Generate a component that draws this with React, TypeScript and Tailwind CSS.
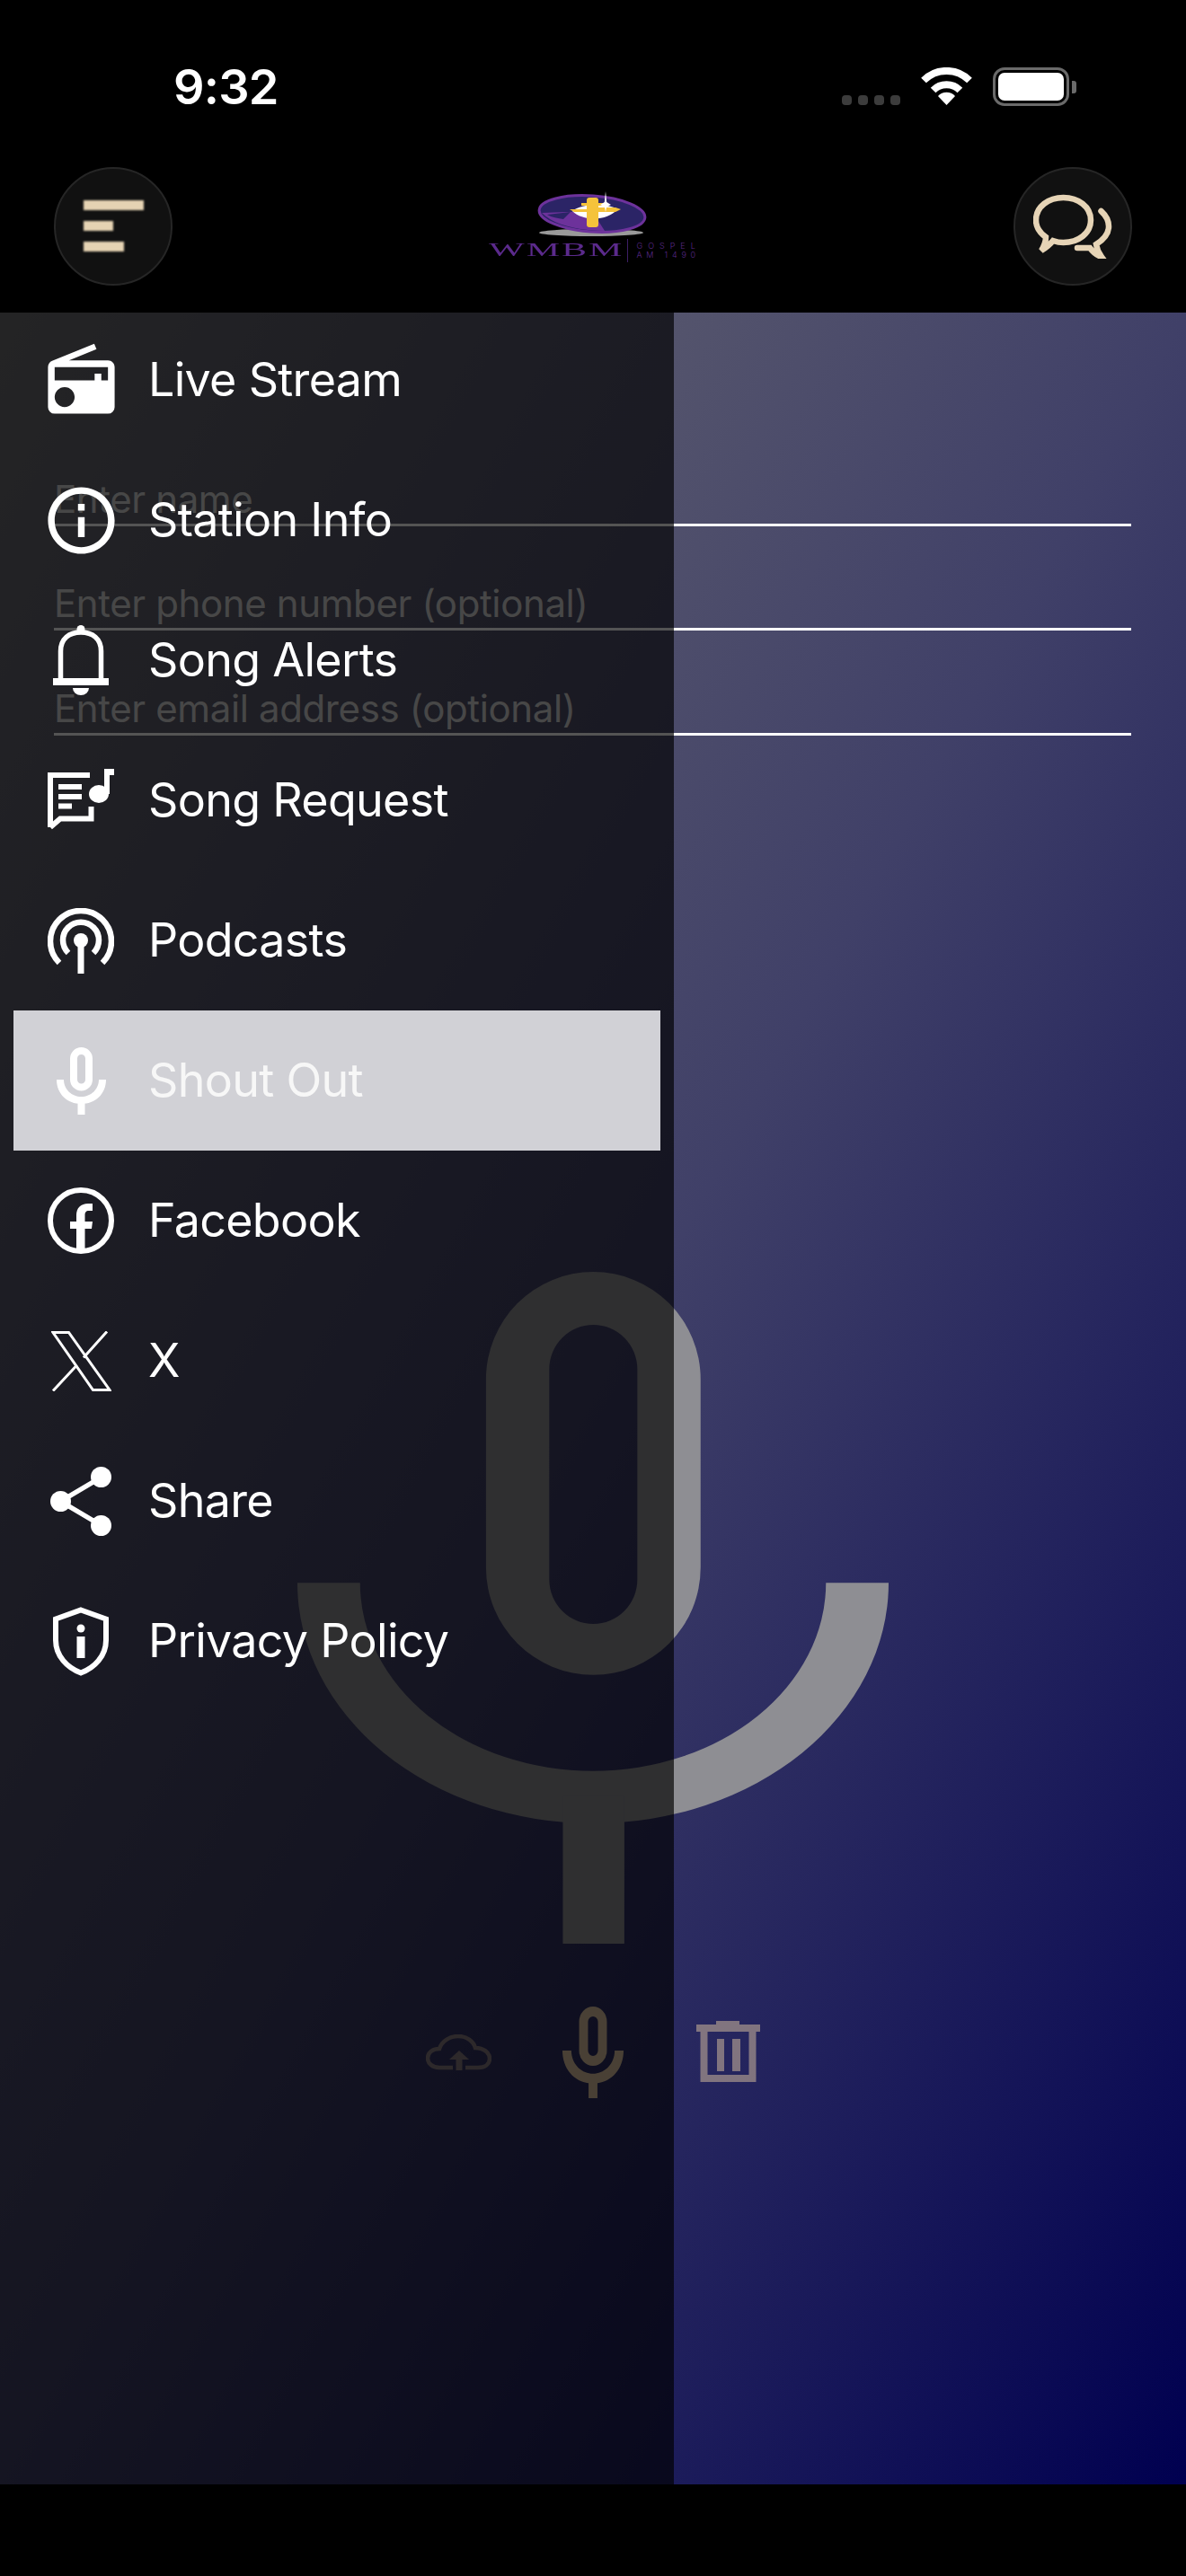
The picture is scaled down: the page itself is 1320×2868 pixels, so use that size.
import React from "react";
import { MdRadio, MdInfoOutline } from "react-icons/md";

const BigMic = ({ className }: { className: string }) => (
  <svg viewBox="0 0 100 100" preserveAspectRatio="none" className={className} fill="currentColor">
    <path
      fillRule="evenodd"
      d="M31.9 16A18.15 16 0 0 1 68.2 16V44A18.15 16 0 0 1 31.9 44ZM42.6 14.5A7.45 6.6 0 0 1 57.5 14.5V45.8A7.45 6.6 0 0 1 42.6 45.8Z"
    />
    <path d="M0 46.3H10.6A39.4 28 0 0 0 89.4 46.3H100A50 35.8 0 0 1 0 46.3Z" />
    <rect x="44.9" y="78" width="10.4" height="22" />
  </svg>
);

const SmallMic = ({ className }: { className: string }) => (
  <svg viewBox="0 0 55 75" preserveAspectRatio="none" className={className} fill="currentColor">
    <path
      fillRule="evenodd"
      d="M15 12.5a12.5 12.5 0 0 1 25 0V36a12.500 12.500 0 0 1-25 0ZM23 12.500a4.500 4.500 0 0 1 9 0V36a4.500 4.500 0 0 1-9 0Z"
    />
    <path d="M0 36H8C8 47 17 55 27.500 55S47 47 47 36H55C55 52 43 63 27.500 63S0 52 0 36Z" />
    <rect x="23.500" y="60" width="8" height="15" />
  </svg>
);

const BellIcon = () => (
  <svg viewBox="0 0 62 78" className="h-[78px] w-[62px]" fill="white">
    <circle cx="31" cy="4.5" r="4.5" />
    <path d="M8.5 60V29C8.5 15 18 8 31 8s22.5 7 22.5 21V60" fill="none" stroke="white" strokeWidth="5.500" />
    <rect x="0" y="59" width="62" height="8" />
    <path d="M22 70H40A9 8 0 0 1 22 70Z" />
  </svg>
);

const SongRequestIcon = () => (
  <svg viewBox="0 0 74 71" className="h-[71px] w-[74px]" fill="white">
    <path d="M3 65V7H47M48.500 42V55.500H14L3 65" fill="none" stroke="white" strokeWidth="6" />
    <rect x="12" y="17" width="26" height="6" />
    <rect x="12" y="28" width="26" height="6" />
    <rect x="12" y="38.500" width="15" height="6" />
    <ellipse cx="57" cy="28" rx="11" ry="10" />
    <rect x="63" y="0" width="6" height="28" />
    <rect x="63" y="0" width="11" height="7" />
  </svg>
);

const PodcastIcon = () => (
  <svg viewBox="0 0 74 73" className="h-[73px] w-[74px]" fill="none" stroke="white" strokeWidth="6.500">
    <path d="M13 61A34 34 0 1 1 61 61" />
    <path d="M23 50A20 20 0 1 1 51 50" />
    <circle cx="37" cy="36" r="8" fill="white" stroke="none" />
    <rect x="33.500" y="38" width="7" height="35" fill="white" stroke="none" />
  </svg>
);

const FacebookIcon = () => (
  <svg viewBox="0 0 74 74" className="h-[74px] w-[74px]" fill="white">
    <circle cx="37" cy="37" r="34" fill="none" stroke="white" strokeWidth="6" />
    <path d="M32 72V46H25V38H32V31C32 23 37 18 45 18H50V26H46C42.500 26 41.500 28 41.500 31V38H50L49 46H41.500V72Z" />
  </svg>
);

const XIcon = () => (
  <svg viewBox="0 0 67 67" className="h-[67px] w-[67px]" fill="none" stroke="white" strokeWidth="3">
    <path d="M2 1.500H19.500L65 65.500H46.500Z" />
    <path d="M62 0.500L36 29.500M28.500 38L2 66.500" />
  </svg>
);

const ShareIcon = () => (
  <svg viewBox="0 0 68 77" className="h-[77px] w-[68px]" fill="white">
    <path d="M57 11.500L11.500 38.500L57 65.500" fill="none" stroke="white" strokeWidth="5.500" />
    <circle cx="11.500" cy="38.500" r="11.500" />
    <circle cx="56.500" cy="11.500" r="11.500" />
    <circle cx="56.500" cy="65.500" r="11.500" />
  </svg>
);

const ShieldIcon = () => (
  <svg viewBox="0 0 62 77" className="h-[77px] w-[62px]" fill="white">
    <path d="M31 3.500L59 13.500V37C59 55 46 68 31 73.500C16 68 3 55 3 37V13.500Z" fill="none" stroke="white" strokeWidth="6" />
    <circle cx="31" cy="24" r="4.500" />
    <rect x="26.500" y="33" width="9" height="24" />
  </svg>
);

const CloudIcon = () => (
  <svg viewBox="0 0 73 40" className="h-[40px] w-[73px]" fill="none" stroke="currentColor" strokeWidth="4.500">
    <path d="M30 37H15C7 37 2 32 2 26.500C2 20 8 16 15 16C18 7 27 2 36 2C46 2 53 8 55 15C64 15 71 20 71 27C71 33 66 37 58 37H44" />
    <path d="M37 40V21" strokeWidth="7" />
    <path d="M26 28L37 18L48 28Z" fill="currentColor" stroke="none" />
  </svg>
);

const TrashIcon = () => (
  <svg viewBox="0 0 71 71" className="h-[71px] w-[71px]" fill="currentColor">
    <rect x="22" y="0" width="26" height="6" />
    <rect x="0" y="4" width="71" height="8" />
    <path d="M8.500 10V64H62.500V10" fill="none" stroke="currentColor" strokeWidth="8" />
    <rect x="23" y="20" width="8" height="36" />
    <rect x="40" y="20" width="9" height="36" />
  </svg>
);

const ChatIcon = () => (
  <svg viewBox="0 0 88 72" className="h-[72px] w-[88px]" fill="none" stroke="#e6d4b6" strokeWidth="6.500" strokeLinecap="round">
    <path d="M33.500 4C50 4 64 14 64 29C64 44 50 54 33.500 54C28 54 25 53 22 52C18 57 14 60 9 63C12 58 14 53 14 48C7 43 3 37 3 29C3 14 17 4 33.500 4Z" />
    <path d="M75.500 19C81 24 84 30 84 36C84 44 78 51 70 56C71 62 73 66 76 70C70 68 66 64 63 60H49" />
  </svg>
);

const WifiIcon = () => (
  <svg viewBox="0 0 57 42" className="h-[42px] w-[57px]" fill="white">
    <path d="M3 14.500A36 36 0 0 1 54 14.500" fill="none" stroke="white" strokeWidth="8" />
    <path d="M13.600 25.500A21 21 0 0 1 43.400 25.500" fill="none" stroke="white" strokeWidth="8" />
    <path d="M28.500 42L19 32A13 13 0 0 1 38 32Z" />
  </svg>
);

const LogoMark = () => (
  <svg viewBox="0 0 124 50" className="h-[50px] w-[124px]">
    <ellipse cx="61" cy="46" rx="58" ry="4" fill="#9a9a9a" />
    <ellipse cx="62" cy="25" rx="59" ry="20" fill="#2b2466" stroke="#6d329b" strokeWidth="3" transform="rotate(4 62 25)" />
    <path d="M6 24L62 22L76 44C48 44 20 38 6 24Z" fill="#6d329b" />
    <path d="M12 26L38 23L30 31C24 30 17 29 12 26Z" fill="#2b2466" />
    <path d="M40 22C50 13 80 13 90 20C80 33 52 34 40 22Z" fill="white" />
    <path d="M37 20H68V18H88L94 20L88 23H42Z" fill="#f5c33b" />
    <rect x="56" y="7" width="13" height="33" rx="3" fill="#f5c33b" />
    <rect x="50" y="13" width="26" height="3" fill="#f5c33b" />
    <path d="M77 0L78.200 12L83 15L78.200 17L77 23L75.800 17L71 15L75.800 12Z" fill="white" />
  </svg>
);

const menu = [
  { label: "Live Stream", icon: <MdRadio size={89} color="white" /> },
  { label: "Station Info", icon: <MdInfoOutline size={89} color="white" /> },
  { label: "Song Alerts", icon: <BellIcon /> },
  { label: "Song Request", icon: <SongRequestIcon /> },
  { label: "Podcasts", icon: <PodcastIcon /> },
  { label: "Shout Out", icon: <SmallMic className="h-[75px] w-[55px] text-white" />, active: true },
  { label: "Facebook", icon: <FacebookIcon /> },
  { label: "X", icon: <XIcon /> },
  { label: "Share", icon: <ShareIcon /> },
  { label: "Privacy Policy", icon: <ShieldIcon /> },
];

const fields = ["Enter name", "Enter phone number (optional)", "Enter email address (optional)"];

export default function App() {
  return (
    <div className="flex h-[2868px] w-[1320px] flex-col overflow-hidden bg-black font-['Inter',sans-serif] text-white">
      <div className="flex h-[186px] items-start justify-between pl-[193px] pr-[122px] pt-[75px]">
        <div className="text-[54px] font-semibold leading-[44px] tracking-[-0.8px]">9:32</div>
        <div className="flex items-start">
          <div className="mr-[23px] mt-[31px] flex gap-[7px]">
            {[0, 1, 2, 3].map((i) => (
              <div key={i} className="h-[11px] w-[11px] rounded-[4px] bg-[#3c3c3c]" />
            ))}
          </div>
          <WifiIcon />
          <div className="ml-[23px] flex items-center">
            <div className="h-[43px] w-[85px] rounded-[13px] border-[3px] border-[#6a6a6a] p-[3px]">
              <div className="h-full w-full rounded-[7px] bg-white" />
            </div>
            <div className="ml-[3px] h-[14px] w-[5px] rounded-r-[3px] bg-[#6a6a6a]" />
          </div>
        </div>
      </div>

      <div className="flex h-[162px] items-start justify-between pl-[60px] pr-[60px]">
        <div className="flex h-[132px] w-[132px] flex-col items-start justify-center gap-[12px] rounded-full border-[2px] border-[#262626] bg-[#111111] pb-[1px] pl-[31px]">
          <div className="h-[11px] w-[67px] bg-[#e5d3b3] blur-[0.8px]" />
          <div className="h-[11px] w-[33px] bg-[#e5d3b3] blur-[0.8px]" />
          <div className="h-[11px] w-[45px] bg-[#e5d3b3] blur-[0.8px]" />
        </div>

        <div className="ml-[7px] mt-[27px] flex w-[240px] flex-col items-start">
          <div className="ml-[53px]">
            <LogoMark />
          </div>
          <div className="mt-[3px] flex h-[26px] items-center text-[#5b2a8c]">
            <div className="w-[154px]">
              <span className="inline-block origin-left scale-x-[2] font-['Liberation_Serif',serif] text-[21px] leading-none tracking-[1px]">
                WMBM
              </span>
            </div>
            <div className="h-[26px] w-px bg-[#3d1f66]" />
            <div className="ml-[10px] flex flex-col text-[9px] font-light leading-[10px]">
              <span className="tracking-[6px]">GOSPEL</span>
              <span className="tracking-[4.800px]">AM 1490</span>
            </div>
          </div>
        </div>

        <div className="flex h-[132px] w-[132px] items-center justify-center rounded-full border-[2px] border-[#262626] bg-[#111111]">
          <ChatIcon />
        </div>
      </div>

      <div className="relative h-[2418px] bg-[linear-gradient(to_bottom_right,#6e6e72,#404068_50%,#000050)]">
        <div className="pl-[60px] pr-[61px] pt-[121px]">
          {fields.map((f) => (
            <div
              key={f}
              className="flex h-[116.500px] items-end border-b-[3px] border-white pb-[2px] text-[42px] leading-[50px] tracking-[-0.38px] text-[#d8d8d8]"
            >
              {f}
            </div>
          ))}
        </div>

        <div className="mt-[597px] flex justify-center">
          <BigMic className="h-[748px] w-[658px] text-[#8e8e93]" />
        </div>

        <div className="mt-[70px] flex h-[102px] items-center justify-center text-[#dcc3a0]">
          <div className="flex w-[150px] justify-center opacity-50">
            <CloudIcon />
          </div>
          <div className="flex w-[150px] justify-center">
            <SmallMic className="h-[102px] w-[68px]" />
          </div>
          <div className="mt-[2px] flex w-[150px] justify-center opacity-50">
            <TrashIcon />
          </div>
        </div>

        <div className="absolute inset-y-0 left-0 w-[750px] bg-black/[0.67]">
          <div className="-mt-[3px] px-[15px]">
            {menu.map((m) => (
              <div key={m.label} className={`flex h-[156px] items-center ${m.active ? "bg-[#d1d1d6]" : ""}`}>
                <div className="flex w-[150px] shrink-0 justify-center">{m.icon}</div>
                <span
                  className={`text-[52px] font-normal leading-none tracking-[-0.7px] ${m.active ? "text-[#f7f7f7]" : "text-white"}`}
                >
                  {m.label}
                </span>
              </div>
            ))}
          </div>
        </div>
      </div>

      <div className="h-[102px] bg-black" />
    </div>
  );
}
